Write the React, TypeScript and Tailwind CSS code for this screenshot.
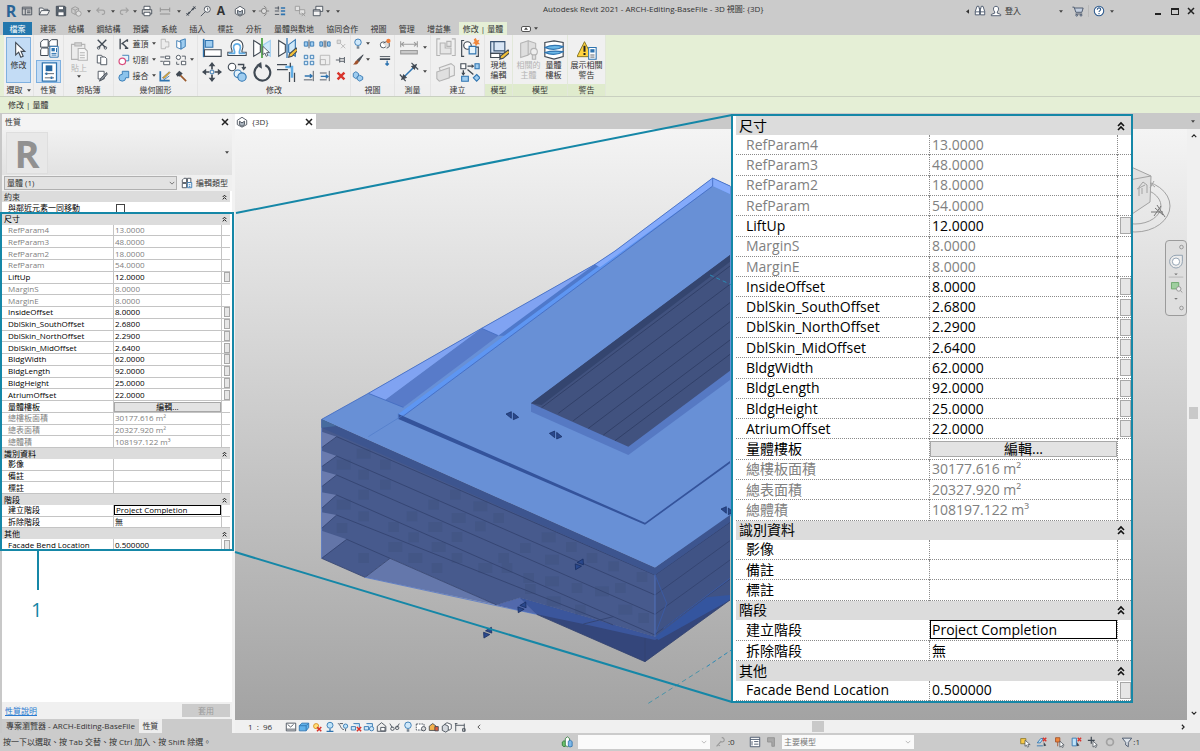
import type { ReactNode } from 'react'
import { useState } from 'react'
import clsx from 'clsx'

/* ---------- icons ---------- */

const ink  = '#414a54'
const blue = '#2f74b0'
const sky  = '#9fcdf0'
const off  = '#b4b4b4'

// 24 unit grid
const BIG: Record<string, ReactNode> = {
  cursor: <path d="M8 3v15l3.600-3.400 2.600 6 2.800-1.200-2.600-5.800H19z" fill="#fff" stroke={ink} strokeWidth="1.300" />,
  typeProps: <g fill="#fff" stroke={ink} strokeWidth="1.200">
    <path d="M2 5l3-3h6v9H2zM12 5l3-3h7v8H12zM2 14l2-2h7v9H2z" />
    <path d="M13 10h10v13H13z" stroke={blue} /><path d="M15 12h4v4h-4z" fill={blue} stroke="none" /><path d="M15 18.500h6M15 20.500h6M21 12v5" stroke={blue} />
  </g>,
  props: <g><path d="M4 1h17v22H4z" fill="#fff" stroke={blue} strokeWidth="1.500" /><path d="M8 4h8v7H8z" fill="#24659f" /><path d="M7 14h11M7 19h11" stroke={ink} /><path d="M9 12.500v3M15 17.500v3" stroke={blue} strokeWidth="2" /></g>,
  paste: <g fill="#ececec" stroke={off} strokeWidth="1.300"><path d="M3 4h16v18H3z" /><path d="M7 2h8v4H7z" fill="#d2d2d2" /><path d="M11 9h8l3 3v11H11z" fill="#f6f6f6" /><path d="M13 14h6M13 17h6M13 20h6" /></g>,
  align: <g strokeWidth="1.300"><path d="M2 1v22" stroke={blue} strokeWidth="2" /><path d="M4 3h9v8H4z" fill={sky} stroke={blue} /><path d="M3 14h20v8H3z" fill="#fff" stroke={ink} /></g>,
  offset: <g fill="none"><path d="M1 21h22v-4h-5c-1-2 2-5 1-8a7 7 0 0 0-14 0c-1 3 2 6 1 8H1z" fill="#fff" stroke={ink} strokeWidth="1.300" /><path d="M2 18.500h7c1-3-2-6-1-8.500a4.200 4.200 0 0 1 8 0c1 2.500-2 5.500-1 8.500h7" stroke="#62aee6" strokeWidth="2" /></g>,
  mirrorPick: <g strokeWidth="1.300"><path d="M2 3l8 5v9l-8 5z" fill="#fff" stroke={ink} /><path d="M22 3l-8 5v9l8 5z" fill="#cfe8f8" stroke={sky} /><path d="M12 0v24" stroke="#45a03c" strokeWidth="2" /><path d="M13 10v10l2.500-2 1.500 4 2-1-1.500-3.500H21z" fill="#fff" stroke={ink} strokeWidth="1" /></g>,
  mirrorDraw: <g strokeWidth="1.300"><path d="M2 3l8 5v9l-8 5z" fill="#fff" stroke={ink} /><path d="M22 2l-8 6v9l8 5z" fill="#cfe8f8" stroke={blue} /><path d="M12 0v24" stroke={blue} strokeWidth="1.500" /><path d="M23 12l-8 7-1 4 4-1 7-7z" fill="#f2c037" stroke={ink} /></g>,
  move: <g fill={ink}><path d="M12 0l4 5h-3v4h-2V5H8zM12 24l4-5h-3v-4h-2v4H8zM0 12l5-4v3h4v2H5v3zM24 12l-5-4v3h-4v2h4v3z" /><path d="M10 10h4v4h-4z" fill="none" stroke={blue} /></g>,
  copy: <g strokeWidth="1.300"><circle cx="6" cy="6" r="4.500" fill="#fff" stroke={ink} /><path d="M13 3h7v5M18 6l2 3 2.500-3" fill="none" stroke={ink} strokeWidth="1.600" /><circle cx="13" cy="14" r="4.500" fill="#e5f3fc" stroke={blue} /><circle cx="18" cy="18" r="5" fill={sky} stroke={blue} /></g>,
  rotate: <g fill="none" stroke={ink} strokeWidth="2.600"><path d="M7 5a9.500 9.500 0 1 0 9-1" /><path d="M11 0l-6 4 7 4z" fill={ink} stroke="none" /></g>,
  trim: <g fill="none" strokeWidth="1.500"><path d="M0 3h12M21 13v11" stroke={ink} /><path d="M0 9h13M15 12v12" stroke={ink} /><path d="M10 6h8v13" stroke="#62aee6" strokeWidth="3" /><path d="M16 1v5" stroke={ink} /></g>,
  dimAligned: <g fill="none" stroke="#9c9c9c" strokeWidth="1.300"><path d="M2 4v7M22 4v7M3 7.500h18M6 5L3 7.500 6 10M18 5l3 2.500L18 10" /><path d="M2 15h20v4H2z" fill="#c9c9c9" /></g>,
  dimLinear: <g fill="none" stroke={ink} strokeWidth="1.400"><path d="M5 19L19 5" stroke={blue} strokeWidth="1.800" /><path d="M1 15l7 8M15 1l8 8" /><path d="M3.500 20.500l2-5 3 3zM20.500 3.500l-2 5-3-3z" fill={ink} /></g>,
  parts: <g fill="#e6e6e6" stroke={off} strokeWidth="1.300"><path d="M5 1H1v20h4M19 1h4v20h-4" fill="none" /><path d="M5 6h6v6h7v7H5zM13 4h5v6h-5z" /></g>,
  group: <g strokeWidth="1.400"><path d="M5 3H2v19h3M19 11h3v11h-3" fill="none" stroke={ink} /><circle cx="9" cy="9" r="4.500" fill="#fff" stroke={ink} /><path d="M11 10h8v9h-8z" fill="#e5f3fc" stroke={blue} /><path d="M19 0l1.300 3 3-1-1.300 3 2 2.500-3 0-2 2.500-1-3-3-.5 2.500-2-1-3z" fill="#f0863a" /></g>,
  stack: <g fill="#ececec" stroke={off} strokeWidth="1.300"><path d="M4 7L18 2l4 3v11L8 21z" /><path d="M1 12l15-5v12L4 23l-3-3z" fill="#dfdfdf" /></g>,
  assembly: <g strokeWidth="1.300"><path d="M1 2h6v6H1z" fill="#fff" stroke={ink} /><path d="M18 2h5v6h-5zM2 17h8v6H2z" fill={sky} stroke={blue} /><path d="M20 15l4 4-4 4-4-4z" fill={sky} stroke={blue} /><path d="M9 5h7M4 10v5M9 9l7 6" stroke={ink} strokeWidth="1.600" /><path d="M14 2.500l3 2.500-3 2.500zM1.500 13L4 16.500 6.500 13z" fill={ink} /></g>,
  inPlace: <g strokeWidth="1.400"><path d="M2 2h17v14H2z" fill="#d9e6f5" stroke="#3b5574" /><path d="M6 2v11h13" fill="none" stroke="#3b5574" /><path d="M2 16h11v5H2z" fill="#fff" stroke={ink} /><path d="M23 12l-9 7-1 4 4-1 8-7z" fill="#f2c037" stroke={ink} /></g>,
  host: <g fill="#dedede" stroke={off} strokeWidth="1.300"><path d="M2 4l9-3v17l-9 3zM11 1l9 3v8l-9 6z" /><circle cx="18" cy="14" r="4" fill="#eee" /><path d="M16 18h4v5h-4z" /></g>,
  floors: <g stroke={ink} strokeWidth="1.400"><path d="M1 3l11-2 11 2v17l-11 3-11-3z" fill="#fff" /><path d="M1 9c7-3 15-3 22-1-7 4-15 4-22 1zM1 15c7-2 15-2 22-1-7 4-15 4-22 1z" fill="#6cb9e8" stroke={blue} /></g>,
  warning: <g><path d="M9 2L0 20h18z" fill="#ffd33d" stroke="#8a7a28" strokeWidth="1.200" strokeLinejoin="round" /><path d="M9 7v7M9 15.500v2.500" stroke="#222" strokeWidth="2.400" /><path d="M14 9h9v14h-9z" fill="#fff" stroke={blue} strokeWidth="1.300" /><path d="M16 11h5v4h-5z" fill={blue} /><path d="M16 18h5M16 20.500h5" stroke={ink} /></g>,
}

// 14 unit grid
const SMALL: Record<string, ReactNode> = {
  window: <g fill="none" stroke={ink}><path d="M1.500 2.500h11v9h-11zM1.500 4.500h11M5 4.500v7" /><path d="M7 7h4M7 9h4" /></g>,
  open: <path d="M1.500 11.500v-8h4l1 1.500h5v2M1.500 11.500l2.500-5h9.500l-2.500 5z" fill="#f4f4f4" stroke={ink} />,
  save: <g stroke={ink}><path d="M1.500 1.500h10l1 1v10h-11z" fill="#5a6570" /><path d="M4 1.500h6v4H4zM3.500 8h7v4.500h-7z" fill="#fff" /></g>,
  sync: <g fill="none" stroke="#999"><path d="M2 4l4-2 4 2v5l-4 2-4-2zM2 4l4 2 4-2M6 6v5" /><circle cx="10" cy="10" r="3" fill="#ddd" /></g>,
  undo: <path d="M5 3L2 6l3 3M2 6h7c3 0 3 5 0 5H8" fill="none" stroke="#a2a2a2" strokeWidth="1.300" />,
  redo: <path d="M9 3l3 3-3 3M12 6H5c-3 0-3 5 0 5h1" fill="none" stroke="#a2a2a2" strokeWidth="1.300" />,
  print: <g fill="#fff" stroke={ink}><path d="M3.500 1.500h7v4h-7z" /><path d="M1.500 5.500h11v5h-11z" fill="#dcdcdc" /><path d="M3.500 8.500h7v4h-7z" /></g>,
  dim: <g fill="none" stroke="#888"><path d="M1.500 3v5M12.500 3v5M2 5.500h10M1 10.500h12" /></g>,
  line: <g stroke={ink}><path d="M3 11l8-8" /><path d="M1.500 9.500l3 3M9.500 1.500l3 3M2 12l3-4 1 1zM12 2L8 5l1 1z" fill={ink} /></g>,
  tag: <g fill="#fff" stroke={ink}><circle cx="8.500" cy="5" r="3.500" /><path d="M1 13l5-5M8 3.500h1v3" fill="none" /></g>,
  cube: <g fill="#fff" stroke={ink}><path d="M1.500 5L7 1.500 12.500 5v5L7 13l-5.500-3z" /><path d="M4 6l3 2 3-2v4l-3 2-3-2z" fill="#aab4be" /></g>,
  section: <g fill="#ddd" stroke="#777"><circle cx="7" cy="7" r="3" /><path d="M7 1l3 3M7 13l3-3M10 7h3M1 7h3" /></g>,
  thin: <g stroke={ink}><path d="M1 3.500h5M1 7h5M1 11h5" /><path d="M8 3.500h5M8 7h5M8 11h5" stroke={blue} strokeWidth="2" /><path d="M5 1.500v4" /></g>,
  closeHidden: <g fill="#e2e2e2" stroke="#999"><path d="M1.500 1.500h5v5h-5zM6.500 5.500h6v5h-6z" /><path d="M9 9l4 4M13 9l-4 4" /></g>,
  switchWin: <g fill="#f2f2f2" stroke={ink}><path d="M4.500 1.500h8v6h-8z" /><path d="M1.500 5.500h8v7h-8z" /><path d="M1.500 7h8" /></g>,
  cut: <g stroke={ink} fill="none"><path d="M2 2l9 9M12 2L3 11" strokeWidth="1.600" /><circle cx="3" cy="11.500" r="1.500" /><circle cx="11" cy="11.500" r="1.500" /></g>,
  copyDoc: <g fill="#fff" stroke={ink}><path d="M1.500 1.500h5l2 2v7h-7z" /><path d="M5.500 3.500h5l2 2v7h-7z" /></g>,
  match: <g stroke={ink}><path d="M2.500 1.500h7v9h-7z" fill="#fff" /><path d="M12.500 3L6 9l-2 4 4-2 5-6z" fill="#8a9199" /></g>,
  cope: <g stroke={ink} fill="none"><path d="M2.500 1v12M4 7l7-5M5 6l6 6M11 1.500v3M8 12h4" strokeWidth="1.600" /></g>,
  cutGeo: <g><path d="M5 1.500h7.500V8H9" fill="#e5f3fc" stroke={blue} /><circle cx="5" cy="8.500" r="3.800" fill="#fff" stroke="#d84b7d" strokeWidth="1.400" /></g>,
  join: <path d="M5 1.500h7.500V9H9a4 4 0 1 1-4-4z" fill="#8cc3ec" stroke={blue} />,
  joinOff: <path d="M2.500 1.500h5v3h4v6h-4v2h-5z" fill="#ececec" stroke={off} />,
  paint: <g stroke={blue}><path d="M2 3l5 2v8l-5-2z" fill="#fff" /><path d="M6 3l6-2v9l-5 3V5z" fill={sky} /></g>,
  wall: <g stroke={ink} fill="#fff"><path d="M1.500 3.500h5M1.500 8.500h3M7.500 2.500h5v3h-5zM5.500 8.500h7v4h-7z" /></g>,
  split: <g stroke={ink} fill="#fff"><circle cx="4" cy="4" r="2.500" /><path d="M8 2.500h4v4M7.500 8.500h5v4h-5zM2 9v3h3" /></g>,
  demolishPlan: <g><path d="M1.500 1.500v11h11" fill="none" stroke={blue} strokeWidth="2" /><path d="M4 9l8-7 1 1-7 7z" fill="#f0b429" stroke={ink} strokeWidth=".6" /><path d="M5 12l7-5" stroke={blue} /></g>,
  hammer: <g><path d="M6 6l7 7" stroke="#9a5a2c" strokeWidth="2" /><path d="M1 5l4-4 4 3-4 4-1-1-1 1z" fill={ink} /></g>,
  splitEl: <g fill={sky} stroke={blue}><path d="M1.500 4.500h4v5h-4zM8.500 4.500h4v5h-4z" /><path d="M7 2v10" stroke={ink} /></g>,
  splitGap: <g fill={sky} stroke={blue}><path d="M1 4.500h3v5H1zM13 4.500h-3v5h3z" /><path d="M6 3v8M8 3v8" stroke={ink} /></g>,
  unpin: <g fill="#ddd" stroke={off}><path d="M2.500 2.500h4v4h-4zM7 7l5 5M12 7l-5 5" /></g>,
  array: <g fill="#d9ecf9" stroke={blue}><path d="M1.500 1.500h4v4h-4zM8.500 1.500h4v4h-4zM1.500 8.500h4v4h-4zM8.500 8.500h4v4h-4z" /></g>,
  scale: <g fill="#eee" stroke={off}><path d="M1.500 1.500h11v11h-11zM1.500 6.500h6v6h-6z" /></g>,
  pin: <path d="M1 7h4M5.500 4v6M5.500 5.500h5M5.500 8.500h5M11 3.500v7" fill="none" stroke={ink} />,
  trimOne: <g fill="none" stroke={ink}><path d="M1 11.500h10M12 1v12" /><path d="M2 7h8M8 5l2.500 2L8 9" stroke={blue} strokeWidth="1.600" /></g>,
  trimMany: <g fill="none" stroke={ink}><path d="M1 3.500h8M1 11.500h8M12 1v12" /><path d="M2 7.500h8M8 5.500l2.500 2L8 9.500" stroke={blue} strokeWidth="1.600" /></g>,
  del: <path d="M3 3l8 8M11 3l-8 8" stroke="#d8342c" strokeWidth="2.800" />,
  bulb: <g><circle cx="7" cy="5" r="3.800" fill="#cfe8fa" stroke={blue} /><path d="M5.500 9.500h3v3h-3z" fill="#7d8791" /></g>,
  brush: <g><path d="M13 1L6 7l2 2z" fill="#555" stroke={ink} /><path d="M6 7l2 2c-1 3-4 4-7 3 3-1 2-4 5-5z" fill="#a0522d" /></g>,
  displace: <g fill="#fff" stroke={blue}><path d="M1.500 4l3-2 3 2v4l-3 2-3-2z" fill={sky} /><path d="M6 8l3-2 3.500 2v3L9 13l-3-2z" fill={sky} /></g>,
  hideSet: <g><circle cx="5" cy="8" r="3.500" fill="#fff" stroke={ink} /><path d="M5 6l4-2 3 2v4l-3 2" fill="#ddd" stroke={ink} /><circle cx="11" cy="3.500" r="2.500" fill="#ef7b38" /></g>,
  linework: <g stroke={ink}><path d="M1 3h12" /><path d="M1 6h12" strokeWidth="2" /><path d="M9.500 8v5M7.500 11l2 2 2-2" fill="none" stroke={blue} strokeWidth="1.600" /></g>,
  editType: <g fill="#fff" stroke={ink}><path d="M1.500 3.500l2-2h3v5h-5zM7.500 1.500h4v5h-4zM1.500 7.500h5v5h-5z" /><path d="M7.500 6.500h5v6h-5z" stroke={blue} /><path d="M9 9h2M9 11h2" stroke={blue} /></g>,
  binoculars: <g fill="#fff" stroke="#3f4d63"><path d="M3.500 1.500h2l1 4v6h-5v-4zM10.500 1.500h-2l-1 4v6h5v-4z" /><path d="M1.500 8h5M7.500 8h5M6 4.500h2" /></g>,
  user: <path d="M7 1.500c3 0 3.500 3 2.500 5L8.500 8v1.500l4 1.500v1.500h-11V11l4-1.500V8l-1-1.500c-1-2-.5-5 2.500-5z" fill="#fff" stroke="#3f4d63" />,
  cart: <g fill="#c4cfdf" stroke="#3f4d63"><path d="M.5 2.500h2l2 6h7l1.500-5H3" /><path d="M4 10.500h8" /><circle cx="5.500" cy="12" r="1" /><circle cx="10.500" cy="12" r="1" /></g>,
  help: <g><circle cx="7" cy="7" r="5.500" fill="#fff" stroke="#2d5a8e" strokeWidth="1.200" /><path d="M5 5.500c0-3 4-2.500 4-.3C9 6.500 7 6.700 7 8.300M7 9.300v1.400" fill="none" stroke="#2d5a8e" strokeWidth="1.300" /></g>,
  sheet: <g fill="#fff" stroke={ink}><path d="M1.500 2.500h11v9h-11z" /><path d="M3 4l3.500 3L10 4M2 9.500h10" /></g>,
  box: <g stroke={blue}><path d="M1.500 5.500l3-3h8v5l-3 4h-8z" fill="#5eb1ea" /><path d="M1.500 5.500h8l3-3M9.500 5.500v6" fill="none" /></g>,
  sunOff: <g><circle cx="6" cy="6" r="3" fill="#ffe27a" stroke="#d68a1f" /><path d="M7 7l5 5M12 7l-5 5" stroke="#d8342c" strokeWidth="1.800" /></g>,
  shadow: <g><circle cx="7" cy="5" r="3.500" fill="#bfe3f8" stroke={blue} /><path d="M3 12h8M7 9v3" stroke={blue} strokeWidth="1.500" /></g>,
  render: <g stroke={ink} fill="none"><path d="M1 3c3 0 3 7 7 7M3 3h4" /><circle cx="10" cy="6" r="2.500" fill="#bfe3f8" stroke={blue} /><path d="M10 9v3" /></g>,
  cropOff: <g stroke={blue} fill="#cfe8fa"><path d="M1.500 6.500h5v4h-5zM4 3h7v5" /><path d="M8 7l5 5M13 7l-5 5" stroke="#d8342c" strokeWidth="1.800" /></g>,
  crop: <g stroke={blue} fill="#cfe8fa"><path d="M1.500 6.500h5v4h-5zM4 3h7v6H7" /><circle cx="10" cy="9" r="2.500" /></g>,
  lock: <g stroke={ink} fill="#eee"><path d="M1.500 6l5-4 5 4v6h-10z" /><path d="M5.500 7.500h5v4h-5z" fill="#fff" /></g>,
  glasses: <g stroke={ink} fill="none"><path d="M1 3l3 5M12 3L9 8" /><circle cx="4" cy="9" r="2" /><circle cx="9.500" cy="8" r="2" /></g>,
  reveal: <g stroke={ink} fill="#fff"><path d="M1.500 3.500h9v7h-9z" strokeDasharray="2 1" /><circle cx="10" cy="9" r="2.500" fill="#ddd" /></g>,
  worksh: <g stroke={ink}><path d="M1.500 6l4-3 4 3v5h-8z" fill="#f3b24c" /><path d="M8 6.500h4v5H8z" fill="#e05c3c" /></g>,
  layers: <g stroke={ink} fill="#fff"><path d="M4 4l3-2 5 2v5l-3 2z" /><path d="M1.500 6l3-2 4 2v5l-3 2-4-2z" fill="#d5d9de" /></g>,
  constraint: <path d="M2 3v9M12 3v9M2 5h10M4 3h-3M10 9h3v3h-3z" fill="none" stroke={ink} />,
  selCursor: <g><path d="M2 3h6v6H2z" fill="#f7c948" stroke="#8f7a2b" /><path d="M7 5v7l1.800-1.500 1 2.500 1.500-.6-1-2.400H13z" fill="#fff" stroke={ink} strokeWidth=".8" /></g>,
  selLinkOff: <g><path d="M1.500 8l4-5h3L5 8zM1 11.500h7" fill="#bfe3f8" stroke={blue} /><path d="M8 2l4 4M12 2L8 6" stroke="#d8342c" strokeWidth="1.600" /><path d="M9 7v5l3-1z" fill={ink} /></g>,
  selPin: <g><path d="M3 2h5v5H3zM5.500 7v5" fill="#f0863a" stroke="#a2502a" /><path d="M8 6v7l1.800-1.500 1 2 1.200-.6-1-2.400H13z" fill="#fff" stroke={ink} strokeWidth=".8" /></g>,
  selFace: <g><path d="M2.500 2.500h5v9h-5z" fill="#bfe3f8" stroke={blue} /><path d="M9 2l4 4M13 2L9 6" stroke="#d8342c" strokeWidth="1.600" /><path d="M8 7v5l3-1z" fill={ink} /></g>,
  drag: <g stroke={ink}><path d="M5 1v8M1 5h8" strokeWidth="1.400" /><path d="M7 6v7l1.800-1.500 1 2 1.200-.6-1-2.400H12z" fill="#fff" strokeWidth=".8" /></g>,
  ring: <circle cx="7" cy="7" r="4" fill="none" stroke="#a2a2a2" strokeWidth="2" />,
  filter: <path d="M1.500 2.500h11L8.500 7.500v5l-3-2v-3z" fill="#dfe5ec" stroke="#3f4d63" />,
  workset: <g strokeWidth="1"><path d="M1.500 7l2-1.500L6 7v4.500l-2.500 1L1.500 11z" fill="#6cc26c" stroke="#2f7a3a" /><path d="M5 3l2.500-2L10 3v8l-2.500 1.500L5 11z" fill="#fff" stroke="#2f7a3a" /><path d="M8.500 6L11 5l2 1.500V12l-2.500.8-2-1z" fill="#7db8e8" stroke={blue} /></g>,
  keyOff: <path d="M9 2a2.500 2.500 0 1 1-1 4.500L3 12M5 10l2 1.500" fill="none" stroke="#999" strokeWidth="1.300" />,
  options: <g fill="#fff" stroke="#3f4d63"><path d="M1.500 1.500h11v11h-11z" /><path d="M1.500 4h11M6 6.500h5M6 9.500h5M3.500 6v5" /></g>,
  exclude: <path d="M3 2h8v10H8V7H3z" fill="#a8a8a8" stroke="#909090" />,
}

function Big({ n }: { n: string }) {
  return <svg viewBox="0 0 24 24" className="w-5 h-5 shrink-0 fill-none">{BIG[n]}</svg>
}

function Small({ n }: { n: string }) {
  return <svg viewBox="0 0 14 14" className="w-3 h-3 shrink-0 fill-none">{SMALL[n]}</svg>
}

function Caret({ className }: { className?: string }) {
  return <svg viewBox="0 0 6 4" className={clsx('w-1 h-[3px] shrink-0', className)}><path d="M0 0h6L3 4z" fill="#444" /></svg>
}

function IconButton({ n, big }: { n: string; big?: boolean }) {
  return <button aria-label={n} className="flex items-center justify-center">{big ? <Big n={n} /> : <Small n={n} />}</button>
}

function CloseX() {
  return <svg viewBox="0 0 8 8" className="w-2 h-2"><path d="M1 1l6 6M7 1L1 7" stroke="#222" strokeWidth="1.500" /></svg>
}

function Chevrons({ large }: { large?: boolean }) {
  return (
    <svg viewBox="0 0 8 10" className={large ? 'w-2 h-[10px]' : 'w-[5px] h-[6px]'}>
      <path d="M1 5l3-3 3 3M1 9l3-3 3 3" fill="none" stroke="#111" strokeWidth="1.600" />
    </svg>
  )
}

/* ---------- title bar ---------- */

const QUICK: [string, string][] = [
  ['window', 'w-[17px]'], ['open', 'w-[18px]'], ['save', 'w-[15px]'], ['sync', 'w-[15px]'], ['v', 'w-[11px]'],
  ['undo', 'w-[13px]'], ['v', 'w-[11px]'], ['redo', 'w-[12px]'], ['v', 'w-[9px]'], ['print', 'w-[16px]'],
  ['dim', 'w-[20px]'], ['v', 'w-[7px]'], ['line', 'w-[17px]'], ['tag', 'w-[14px]'], ['A', 'w-[16px]'],
  ['cube', 'w-[22px]'], ['v', 'w-[6px]'], ['section', 'w-[14px]'], ['thin', 'w-[18px]'], ['closeHidden', 'w-[22px]'],
  ['switchWin', 'w-[14px]'], ['v', 'w-[6px]'], ['v', 'w-[14px]'],
]

function TitleBar() {
  return (
    <header className="relative flex items-center h-[22px] pl-[4px] pr-[5px] bg-[#cbcbcb]">
      <span className="w-[14px] text-center text-[16px] leading-[16px] font-bold text-[#2a6496]">R</span>
      {QUICK.map(([n, w], i) => (
        <button key={i} aria-label={n} className={clsx('flex items-center justify-center shrink-0', w)}>
          {n === 'v' ? <Caret /> : n === 'A' ? <b className="text-[12px] leading-[12px]">A</b> : <Small n={n} />}
        </button>
      ))}
      <h1 className="absolute left-[543px] top-[4px] leading-[10px] whitespace-nowrap">Autodesk Revit 2021 - ARCH-Editing-BaseFile - 3D 視圖: {'{3D}'}</h1>
      <div className="flex items-center ml-auto">
        <svg viewBox="0 0 4 6" className="w-[3px] h-[5px] mr-[5px]"><path d="M4 0v6L0 3z" fill="#333" /></svg>
        <IconButton n="binoculars" />
        <button className="flex items-center gap-[3px] ml-[4px]"><Small n="user" />登入</button>
        <Caret className="ml-[38px] mr-[9px]" />
        <IconButton n="cart" />
        <span className="w-px h-3 mx-[4px] bg-[#bbb]" />
        <IconButton n="help" />
        <Caret className="ml-[5px] mr-[41px]" />
        <button aria-label="min" className="w-[6px] h-2 border-b-2 border-[#222] mr-[10px]" />
        <button aria-label="max" className="w-2 h-[7px] border border-t-2 border-[#222] mr-[8px]" />
        <button aria-label="close"><CloseX /></button>
      </div>
    </header>
  )
}

const TABS = ['建築', '結構', '鋼結構', '預鑄', '系統', '插入', '標註', '分析', '量體與敷地', '協同合作', '視圖', '管理', '增益集']

function RibbonTabs() {
  return (
    <nav className="flex h-[13px] pl-[3px] bg-[#cbcbcb]">
      <button className="w-[29px] bg-[#2277ad] text-white">檔案</button>
      <div className="flex justify-between w-[411px] mx-[8px]">
        {TABS.map(t => <button key={t}>{t}</button>)}
      </div>
      <button className="w-[48px] bg-[#e5efd6]">修改 | 量體</button>
      <button aria-label="ribbon" className="flex items-center gap-[3px] ml-[14px]">
        <span className="flex items-center justify-center w-[10px] h-[6px] rounded-xs border border-[#555] bg-white"><Caret className="rotate-180" /></span>
        <Caret />
      </button>
    </nav>
  )
}

/* ---------- ribbon ---------- */

function Group({ label, width, green, caret, children }: { label: string; width: string; green?: boolean; caret?: boolean; children: ReactNode }) {
  return (
    <section className={clsx('flex flex-col shrink-0 border-r', width, green ? 'border-[#e2e8da]' : 'border-[#e4e4e4]')}>
      <div className="flex-1 flex items-center justify-center bg-[#f0f0f0]">{children}</div>
      <div className={clsx('flex items-center justify-center gap-1 h-[12px]', green ? 'bg-[#dfebcd]' : 'bg-[#efefef]')}>
        {label}{caret && <Caret />}
      </div>
    </section>
  )
}

function LabelledBig({ n, lines, disabled }: { n: string; lines: string[]; disabled?: boolean }) {
  return (
    <button disabled={disabled} className={clsx('flex flex-col items-center leading-[10px]', disabled && 'text-[#b4b4b4]')}>
      <Big n={n} />
      {lines.map(l => <span key={l}>{l}</span>)}
    </button>
  )
}

function Ribbon() {
  return (
    <div className="flex h-[62px] pl-[4px] bg-[#e5efd6] border-b border-[#c9d0c0]">
      <Group label="選取" width="w-[30px]" caret>
        <button className="flex flex-col items-center w-[25px] h-[46px] pt-[2px] border border-[#7eb0e0] bg-[#c3dcf5]">
          <Big n="cursor" />修改
        </button>
      </Group>
      <Group label="性質" width="w-[30px]">
        <div className="flex flex-col gap-px">
          <button aria-label="typeProps" className="flex items-center justify-center w-[25px] h-[23px]"><Big n="typeProps" /></button>
          <button aria-label="props" className="flex items-center justify-center w-[25px] h-[23px] border border-[#7eb0e0] bg-[#c3dcf5]"><Big n="props" /></button>
        </div>
      </Group>
      <Group label="剪貼簿" width="w-[50px]">
        <div className="flex items-center gap-[7px]">
          <button disabled className="flex flex-col items-center gap-[2px] text-[#b4b4b4]"><Big n="paste" />貼上<Caret /></button>
          <div className="flex flex-col gap-[4px]"><IconButton n="cut" /><IconButton n="copyDoc" /><IconButton n="match" /></div>
        </div>
      </Group>
      <Group label="幾何圖形" width="w-[84px]">
        <div className="flex items-center gap-[3px]">
          <div className="flex flex-col gap-[4px]">
            {[['cope', '蓋頂'], ['cutGeo', '切割'], ['join', '接合']].map(([n, t]) => (
              <button key={n} className="flex items-center gap-[3px] h-3"><Small n={n} />{t}<Caret /></button>
            ))}
          </div>
          <div className="grid grid-cols-2 gap-[4px]">
            {['joinOff', 'paint', 'wall', 'split', 'demolishPlan', 'hammer'].map(n => <IconButton key={n} n={n} />)}
          </div>
          <Caret />
        </div>
      </Group>
      <Group label="修改" width="w-[153px]">
        <div className="flex items-center gap-[6px]">
          <div className="grid grid-cols-4 gap-x-[5px] gap-y-[4px]">
            {['align', 'offset', 'mirrorPick', 'mirrorDraw', 'move', 'copy', 'rotate', 'trim'].map(n => <IconButton key={n} n={n} big />)}
          </div>
          <div className="grid grid-cols-3 gap-[4px]">
            {['splitEl', 'splitGap', 'unpin', 'array', 'scale', 'pin', 'trimOne', 'trimMany', 'del'].map(n => <IconButton key={n} n={n} />)}
          </div>
        </div>
      </Group>
      <Group label="視圖" width="w-[44px]">
        <div className="grid grid-cols-2 gap-x-[6px] gap-y-[4px]">
          <button aria-label="bulb" className="flex items-center gap-[2px]"><Small n="bulb" /><Caret /></button>
          <IconButton n="hideSet" />
          <button aria-label="brush" className="flex items-center gap-[2px]"><Small n="brush" /><Caret /></button>
          <IconButton n="linework" />
          <button aria-label="displace" className="flex items-center"><Small n="displace" /></button>
        </div>
      </Group>
      <Group label="測量" width="w-[36px]">
        <div className="flex flex-col gap-[4px]">
          <button aria-label="dimAligned" className="flex items-center gap-[4px]"><Big n="dimAligned" /><Caret /></button>
          <button aria-label="dimLinear" className="flex items-center gap-[4px]"><Big n="dimLinear" /><Caret /></button>
        </div>
      </Group>
      <Group label="建立" width="w-[54px]">
        <div className="grid grid-cols-2 gap-[4px]">
          {['parts', 'group', 'stack', 'assembly'].map(n => <IconButton key={n} n={n} big />)}
        </div>
      </Group>
      <Group label="模型" width="w-[28px]" green><LabelledBig n="inPlace" lines={['現地', '編輯']} /></Group>
      <Group label="模型" width="w-[55px]" green>
        <div className="flex gap-[3px]">
          <LabelledBig n="host" lines={['相關的', '主體']} disabled />
          <LabelledBig n="floors" lines={['量體', '樓板']} />
        </div>
      </Group>
      <Group label="警告" width="w-[38px]" green><LabelledBig n="warning" lines={['展示相關', '警告']} /></Group>
    </div>
  )
}

/* ---------- parameters ---------- */

type Param = { name: string; value?: string; kind?: 'head' | 'locked' | 'linked' | 'action' | 'edit' }

const PARAMS: Param[] = [
  { name: '尺寸', kind: 'head' },
  { name: 'RefParam4', value: '13.0000', kind: 'locked' },
  { name: 'RefParam3', value: '48.0000', kind: 'locked' },
  { name: 'RefParam2', value: '18.0000', kind: 'locked' },
  { name: 'RefParam', value: '54.0000', kind: 'locked' },
  { name: 'LiftUp', value: '12.0000', kind: 'linked' },
  { name: 'MarginS', value: '8.0000', kind: 'locked' },
  { name: 'MarginE', value: '8.0000', kind: 'locked' },
  { name: 'InsideOffset', value: '8.0000', kind: 'linked' },
  { name: 'DblSkin_SouthOffset', value: '2.6800', kind: 'linked' },
  { name: 'DblSkin_NorthOffset', value: '2.2900', kind: 'linked' },
  { name: 'DblSkin_MidOffset', value: '2.6400', kind: 'linked' },
  { name: 'BldgWidth', value: '62.0000', kind: 'linked' },
  { name: 'BldgLength', value: '92.0000', kind: 'linked' },
  { name: 'BldgHeight', value: '25.0000', kind: 'linked' },
  { name: 'AtriumOffset', value: '22.0000', kind: 'linked' },
  { name: '量體樓板', value: '編輯...', kind: 'action' },
  { name: '總樓板面積', value: '30177.616 m²', kind: 'locked' },
  { name: '總表面積', value: '20327.920 m²', kind: 'locked' },
  { name: '總體積', value: '108197.122 m³', kind: 'locked' },
  { name: '識別資料', kind: 'head' },
  { name: '影像' },
  { name: '備註' },
  { name: '標註' },
  { name: '階段', kind: 'head' },
  { name: '建立階段', value: 'Project Completion', kind: 'edit' },
  { name: '拆除階段', value: '無' },
  { name: '其他', kind: 'head' },
  { name: 'Facade Bend Location', value: '0.500000', kind: 'linked' },
]

function ParamTable({ large, phase, onPhase }: { large?: boolean; phase: string; onPhase: (v: string) => void }) {
  const line = large ? 'border-dotted border-[#8a8a8a]' : 'border-[#c4c4c4]'
  return (
    <table className={clsx('w-full table-fixed border-separate border-spacing-0 bg-white text-black', large ? 'h-[585px] text-[14px] leading-[18px]' : 'h-[337px] leading-[10px]')}>
      <colgroup>
        <col />
        <col className={large ? 'w-[188px]' : 'w-[108px]'} />
        <col className={large ? 'w-[14px]' : 'w-[9px]'} />
      </colgroup>
      <tbody>
        {PARAMS.map(p => p.kind === 'head' ? (
          <tr key={p.name} className="bg-[#dcdcdc]">
            <th colSpan={2} className={clsx('p-0 text-left font-normal', large ? 'pl-[3px]' : 'pl-[2px]')}>{p.name}</th>
            <td className="relative p-0">
              <button aria-label={p.name} className={clsx('absolute inset-y-0 flex items-center', large ? 'right-[6px]' : 'right-[3px]')}><Chevrons large={large} /></button>
            </td>
          </tr>
        ) : (
          <tr key={p.name} className={p.kind === 'locked' ? 'text-[#808080]' : undefined}>
            <th className={clsx('p-0 text-left font-normal border-b whitespace-nowrap', line, large ? 'pl-[10px]' : 'pl-[6px]')}>{p.name}</th>
            <td className={clsx('p-0 border-b border-l whitespace-nowrap', line)}>
              {p.kind === 'action' ? (
                <button className="block w-full border border-[#a8a8a8] bg-[#e3e3e3] leading-none">{p.value}</button>
              ) : p.kind === 'edit' ? (
                <input
                  aria-label={p.name}
                  value={phase}
                  onChange={e => onPhase(e.target.value)}
                  className={clsx('block w-full border border-black bg-white pl-px outline-none', large ? 'h-[19px]' : 'h-[10px]')}
                />
              ) : <span className={large ? 'pl-[2px]' : 'pl-px'}>{p.value}</span>}
            </td>
            <td className={clsx('p-0 border-b border-l', line)}>
              {p.kind === 'linked' && <button aria-label={p.name} className={clsx('block ml-auto border border-[#a8a8a8] bg-[#e6e6e6]', large ? 'w-[11px] h-[17px]' : 'w-[6px] h-[10px]')} />}
            </td>
          </tr>
        ))}
      </tbody>
    </table>
  )
}

function PropertiesPanel({ phase, onPhase }: { phase: string; onPhase: (v: string) => void }) {
  return (
    <aside className="flex flex-col w-[232px] shrink-0 pl-[2px] bg-[#c8c8c8]">
      <div className="flex items-center justify-between h-[16px] px-[3px] bg-[#f4f4f4]">
        性質<button aria-label="close"><CloseX /></button>
      </div>
      <div className="flex items-center justify-between h-[45px] pl-[4px] pr-[3px] bg-linear-to-b from-[#f1f1f1] to-[#e2e2e2]">
        <div className="flex items-center justify-center w-[42px] h-[42px] border border-[#dedede] bg-[#e8e8e8] text-[38px] leading-[38px] font-bold text-[#919191]">R</div>
        <Caret />
      </div>
      <div className="flex items-center gap-[4px] h-[16px] px-[2px] bg-[#f0f0f0]">
        <div className="relative w-[173px]">
          <select aria-label="類型" className="block appearance-none w-full h-[14px] pl-[2px] border border-[#b0b0b0] bg-[#e2e2e2]"><option>量體 (1)</option></select>
          <svg viewBox="0 0 8 5" className="absolute right-[2px] top-[5px] w-[6px] h-[4px]"><path d="M1 1l3 3 3-3" fill="none" stroke="#555" /></svg>
        </div>
        <button className="flex items-center gap-[3px]"><Small n="editType" />編輯類型</button>
      </div>
      <div className="flex flex-col flex-1 pr-[2px] bg-white">
        <div className="flex items-center justify-between h-[11px] pl-[2px] pr-[3px] bg-[#dcdcdc]">約束<Chevrons /></div>
        <label className="flex items-center h-[12px] pl-[6px] text-black">
          <span className="w-[106px]">與鄰近元素一同移動</span>
          <input type="checkbox" className="appearance-none w-[9px] h-[9px] ml-[2px] border border-[#444] bg-white" />
        </label>
        <div className="relative">
          <ParamTable phase={phase} onPhase={onPhase} />
          <div className="absolute -left-[2px] -right-[4px] -top-[2px] bottom-0 border-2 border-[#1587a7] pointer-events-none" />
        </div>
      </div>
      <div className="flex items-center justify-between h-[17px] pl-[3px] pr-[2px] bg-[#f0f0f0]">
        <a href="#help" className="text-[#2a7bd0] underline">性質說明</a>
        <button disabled className="w-[48px] h-[13px] bg-[#cccccc] text-[#9a9a9a]">套用</button>
      </div>
      <div className="flex h-[14px] bg-[#cbcbcb]">
        <button className="px-[4px] whitespace-nowrap">專案瀏覽器 - ARCH-Editing-BaseFile</button>
        <button className="w-[23px] bg-[#ededed]">性質</button>
      </div>
    </aside>
  )
}

/* ---------- 3D view ---------- */

const SLABS = [[833, 800, 1215], [890, 858, 1275], [950, 915, 1333], [1015, 975, 1395], [1075, 1035, 1450]]
const PANES = [
  [395, 852], [465, 885], [400, 915], [335, 885], [465, 945], [675, 975], [745, 1010], [610, 1005], [400, 975], [335, 1005], [400, 1040], [545, 1040],
  [680, 1045], [805, 1045], [490, 1072], [610, 1072], [335, 1075], [680, 1102], [950, 1103], [1023, 1132], [550, 1103], [490, 1132], [750, 1070], [885, 1135],
  [620, 1132], [680, 1165], [820, 1165], [550, 1165], [400, 1165], [1085, 1165], [960, 1170], [1150, 1190], [830, 1195], [760, 1195], [895, 1225], [620, 1195],
  [960, 1235], [1235, 1222], [1040, 1255], [1110, 1265], [1170, 1255], [900, 1258], [1180, 1320], [1240, 1345], [1050, 1320], [965, 1295],
]
const HANDLES = [[847, 737, 0], [977, 795, 0], [1492, 1022, 0], [1048, 1183, -70], [876, 1312, -70], [773, 1388, -70]]

function Building() {
  return (
    <svg viewBox="15 -123 2856 1773" className="absolute left-0 top-0 w-[952px] h-[591px]">
      {/* walls */}
      <path d="M275 748L275 1165 405 1222 480 1165 800 1305 870 1283 1275 1400V1193z" fill="#475a8d" />
      {SLABS.map(([l, r]) => <path key={l} d={`M275 ${l - 48}L320 ${r} 275 ${l}z`} fill="#6a7bae" />)}
      <path d="M275 1082L350 1108 275 1165z" fill="#6375a8" />
      <path d="M480 1165L800 1305 405 1222z" fill="#6477ab" />
      <path d="M800 1305L870 1283 1275 1400 1500 1270V1290L1245 1475 920 1333z" fill="#34467b" />
      <path d="M870 1283L1275 1400 1500 1270V1290L1275 1410 1060 1362 920 1333z" fill="#3b569c" />
      <path d="M800 1305L870 1283 920 1333z" fill="#5269ac" />
      <path d="M1275 1193L1500 1035V1280L1275 1400z" fill="#405385" />
      <path d="M1275 1400L1430 1282 1500 1275V1290L1285 1410z" fill="#34559f" />
      {PANES.map(([x, y], i) => <rect key={i} x={x - 15} y={y - 16} width={i % 3 ? 32 : 42} height="30" fill="#3a4a78" opacity=".28" />)}
      <g fill="none" stroke="#33426f" strokeWidth="2.500">
        {SLABS.slice(0, 4).map(([l, r, e]) => <path key={l} d={`M275 ${l}L320 ${r} 1275 ${e}`} />)}
        <path d="M275 1075L320 1035 1150 1365M275 1165L350 1108 800 1305M275 1165L405 1222 480 1165M920 1333L1245 1475 1500 1290M1245 1475V1405" />
        <path d="M1275 1215L1500 1057M1275 1275L1500 1112M1275 1333L1500 1170M1275 1393L1500 1228M1060 1362L1150 1340" />
        <path d="M275 748V1165M1275 1193V1400M405 1222L920 1333" stroke="#5578c8" />
        <path d="M1275 1215L1310 1300 1275 1395M1300 1375L1500 1225" stroke="#3a5ca8" />
      </g>

      {/* roof */}
      <path d="M275 748L415 670 755 475 1095 283 1155 243 1448 24 2000 270V700L1275 1193z" fill="#6890d6" />
      <path d="M275 748L1275 1193 1500 1035V1056L1275 1215 275 773z" fill="#3d558f" />
      <path d="M275 748L320 768 275 773z" fill="#466b9e" />
      <path d="M465 690L755 475 805 497 520 712z" fill="#587bc9" />
      <path d="M415 670L755 475 465 690zM755 475L1095 283 1060 325 805 497zM275 748L415 670 320 722z" fill="#80a3f2" />
      <path d="M805 497L1095 283 1110 292 830 497z" fill="#4f79cb" />
      <path d="M505 732L1110 285 1448 24 1500 48V72L1448 48 1200 232 515 742z" fill="#5e96f2" />
      <path d="M1095 283L1155 243 1448 24 1500 48V72L1448 48 1110 292z" fill="#84aafb" />
      <path d="M275 748L415 670 755 475 1095 283 1155 243 1448 24 1500 48M1448 24V48L520 738M415 670L520 712M755 475L805 497" fill="none" stroke="#426bc0" strokeWidth="2.500" />
      <path d="M505 732L1245 1058 1500 873V880L1245 1064 505 747z" fill="#34539b" />
      <path d="M520 735L415 800M505 730V748" stroke="#4f7ac8" strokeWidth="2" />

      {/* atrium */}
      <path d="M903 700L1500 258V630L1195 855 903 725z" fill="#5679c3" />
      <path d="M903 700L1500 255V602L1195 830z" fill="#41527f" />
      <path d="M903 700L1500 255V275L935 705z" fill="#34456f" />
      <g stroke="#2e3c64" strokeWidth="2.500">
        <path d="M935 713L1500 288M985 730L1500 343M1030 752L1500 398M1075 775L1500 455M1120 795L1500 510M1155 812L1500 553" />
      </g>
      <path d="M1440 315L1560 370M1430 1490L1600 1375" stroke="#2b89b4" strokeWidth="3" strokeDasharray="12 9" />
      <path d="M1255 1600L1420 1495" stroke="#4a93a8" strokeWidth="3" strokeDasharray="14 10" />

      {HANDLES.map(([x, y, a]) => (
        <g key={x} transform={`translate(${x} ${y}) rotate(${a})`} fill="#2a488c" stroke="#142a5e" strokeWidth="2">
          <path d="M-19 -5L-3 -12V8zM19 5L3 12V-8z" />
        </g>
      ))}
    </svg>
  )
}

function ViewCube() {
  return (
    <svg viewBox="0 0 60 80" className="absolute right-[10px] top-[31px] w-[60px] h-[80px]" fill="none" stroke="#a2a2a2">
      <ellipse cx="18" cy="46" rx="35" ry="26" />
      <ellipse cx="18" cy="46" rx="26" ry="18" />
      <path d="M0 8l12-2 22 10-1 26L12 56 0 50z" fill="#e0e0e0" />
      <path d="M12 20l22-4M12 20v36" />
      <path d="M22 36v-9l4-5 4 3v8M25 34v-6M20 29l8-4" />
      <path d="M38 48l8 7M44 46l-7 10M40 45l8 12M34 52h12" stroke="#777" />
      <path d="M33 23l5 4M37 21l-4 7" />
    </svg>
  )
}

function NavBar() {
  return (
    <div className="absolute right-0 top-[111px] w-[22px] h-[76px] rounded-sm border border-[#9b9b9b] bg-[#dedede]">
      <svg viewBox="0 0 22 76" className="w-full h-full" fill="none" stroke="#929292">
        <circle cx="17" cy="4" r="2" /><circle cx="17" cy="71" r="2" />
        <path d="M4 20a7 7 0 0 1 7-7h7v7a7 7 0 0 1-14 0z" fill="#ececec" stroke="#8b9cac" />
        <circle cx="11" cy="20" r="4" fill="#fff" stroke="#8b9cac" />
        <path d="M9 33h4l-2 2zM9 60h4l-2 2z" fill="#777" stroke="none" />
        <path d="M3 37h16" stroke="#b5b5b5" />
        <path d="M6 43h8v7H6z" fill="#9fcf9f" stroke="#6ba66b" /><circle cx="14" cy="50" r="2.500" fill="#eee" /><path d="M16 52l2 2" />
      </svg>
    </div>
  )
}

const VIEW_TOOLS = ['sheet', 'box', 'sunOff', 'shadow', 'render', 'cropOff', 'crop', 'lock', 'glasses', 'bulb', 'reveal', 'worksh', 'layers', 'constraint']

function Viewport() {
  return (
    <main className="flex flex-col flex-1 min-w-0 pl-[3px] bg-[#f2f2f2]">
      <div className="flex items-center h-[15px] pr-[5px] bg-[#c9c9c9]">
        <div className="flex items-center w-[81px] h-full pl-px pr-[3px] bg-white">
          <Small n="cube" /><span className="pl-[4px]">{'{3D}'}</span>
          <button aria-label="close" className="ml-auto"><CloseX /></button>
        </div>
        <Caret className="ml-auto" />
      </div>
      <div className="flex flex-1 min-h-0">
        <div className="relative flex-1 overflow-hidden bg-linear-to-b from-[#f4f4f4] to-[#a3a3a3]">
          <Building />
          <ViewCube />
          <NavBar />
        </div>
        <div className="flex flex-col items-center w-[13px] py-[5px] bg-[#f0f0f0]">
          <svg viewBox="0 0 8 5" className="w-[6px] h-[4px]"><path d="M1 4l3-3 3 3" fill="none" stroke="#222" strokeWidth="1.500" /></svg>
          <span className="w-[9px] h-[12px] mt-[269px] bg-[#c9c9c9]" />
          <svg viewBox="0 0 8 5" className="w-[6px] h-[4px] mt-auto"><path d="M1 1l3 3 3-3" fill="none" stroke="#222" strokeWidth="1.500" /></svg>
        </div>
      </div>
      <div className="flex items-center h-[13px] pl-[13px] pr-[15px] bg-[#f0f0f0]">
        <button className="w-[37px] text-left">1&nbsp; :&nbsp; 96</button>
        <div className="flex gap-px">{VIEW_TOOLS.map(n => <IconButton key={n} n={n} />)}</div>
        <svg viewBox="0 0 5 8" className="w-[4px] h-[6px] ml-[11px]"><path d="M4 1L1 4l3 3" fill="none" stroke="#222" /></svg>
        <div className="flex-1 pr-[26px]"><span className="block w-[12px] h-[11px] mx-auto bg-[#c9c9c9]" /></div>
        <svg viewBox="0 0 5 8" className="w-[4px] h-[6px]"><path d="M1 1l3 3-3 3" fill="none" stroke="#222" strokeWidth="1.500" /></svg>
      </div>
    </main>
  )
}

/* ---------- status bar ---------- */

function StatusSelect({ label, value }: { label: string; value: string }) {
  return (
    <div className="relative w-[132px]">
      <select aria-label={label} className="block appearance-none w-full h-[14px] pl-[2px] bg-[#fafafa] text-[#777]"><option>{value}</option></select>
      <svg viewBox="0 0 8 5" className="absolute right-[3px] top-[5px] w-[6px] h-[4px]"><path d="M1 1l3 3 3-3" fill="none" stroke="#aaa" /></svg>
    </div>
  )
}

function StatusBar() {
  return (
    <footer className="flex items-center h-[18px] bg-[#cbcbcb]">
      <p className="w-[561px] pl-[3px]">按一下以選取、按 Tab 交替、按 Ctrl 加入、按 Shift 除選。</p>
      <IconButton n="workset" />
      <span className="w-[5px]" />
      <StatusSelect label="工作集" value="" />
      <div className="flex items-center gap-[2px] w-[39px] pl-[4px]"><Small n="keyOff" />:0</div>
      <div className="flex items-center gap-[4px] pr-[5px]"><IconButton n="options" /><IconButton n="exclude" /></div>
      <StatusSelect label="設計選項" value="主要模型" />
      <div className="flex items-center gap-[5px] ml-auto pr-[60px]">
        {['selCursor', 'selLinkOff', 'selPin', 'selFace', 'drag', 'ring'].map(n => <IconButton key={n} n={n} />)}
        <button className="flex items-center"><Small n="filter" />:1</button>
      </div>
    </footer>
  )
}

export default function App() {
  const [phase, setPhase] = useState('Project Completion')

  return (
    <div className="relative flex flex-col min-h-screen overflow-hidden bg-[#cbcbcb] text-[8px] leading-[10px] text-[#333] font-['Open_Sans','Noto_Sans_CJK_TC',sans-serif]">
      <TitleBar />
      <RibbonTabs />
      <Ribbon />
      <div className="flex items-center h-[17px] pl-[8px] bg-[#e5efd6] border-b border-[#c9c9c9]">修改 | 量體</div>
      <div className="flex flex-1">
        <PropertiesPanel phase={phase} onPhase={setPhase} />
        <Viewport />
      </div>
      <StatusBar />

      {/* Callout */}
      <svg viewBox="0 0 1200 751" className="absolute left-0 top-0 w-[1200px] h-[751px] pointer-events-none" fill="none" stroke="#1587a7" strokeWidth="2">
        <path d="M236 213L732 115M235 552L732 702M38 551v39" />
      </svg>
      <span className="absolute left-[31px] top-[598px] text-[20px] leading-[24px] text-[#1587a7]">1</span>
      <div className="absolute left-[731px] top-[114px] w-[402px] pl-[3px] border-2 border-[#1587a7] bg-white">
        <ParamTable large phase={phase} onPhase={setPhase} />
      </div>
    </div>
  )
}
